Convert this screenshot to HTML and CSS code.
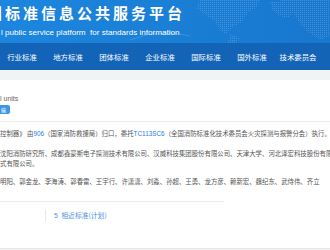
FILE: index.html
```html
<!DOCTYPE html>
<html>
<head>
	<meta charset="utf-8">
	<title>全国标准信息公共服务平台</title>
	<link rel="stylesheet" href="styles.css">
</head>
<body>
	<header class="banner">
		<svg class="map" width="200" height="43" viewBox="0 0 200 43">
			<defs>
				<pattern id="dots" width="2" height="2" patternUnits="userSpaceOnUse">
					<rect width="1" height="1" fill="#fff" />
				</pattern>
			</defs>
			<g fill="url(#dots)" opacity="0.18">
				<path d="M70 0 L130 0 L126 8 L118 12 L112 22 L104 26 L96 34 L90 30 L84 20 L74 14 L66 8 Z" />
				<path d="M140 2 L160 0 L166 10 L158 18 L150 16 L142 10 Z" />
				<path d="M150 0 L200 0 L200 36 L190 40 L178 32 L170 24 L164 14 L156 6 Z" />
				<path d="M100 34 L110 38 L106 43 L98 43 Z" />
			</g>
			<path d="M0 40 Q30 28 60 36" stroke="#fff" stroke-opacity="0.15" fill="none" />
		</svg>
		<h1 class="title">国标准信息公共服务平台</h1>
		<p class="subtitle">l public service platform&nbsp; for standards information</p>
	</header>

	<nav class="menu">
		<a class="menuItem">行业标准</a>
		<a class="menuItem">地方标准</a>
		<a class="menuItem">团体标准</a>
		<a class="menuItem">企业标准</a>
		<a class="menuItem">国际标准</a>
		<a class="menuItem">国外标准</a>
		<a class="menuItem">技术委员会</a>
	</nav>

	<div class="band"></div>

	<div class="panel">
		<div class="units">
			<div class="unitsLabel">l units</div>
			<span class="tag">输</span>
		</div>
		<div class="detail">
			<p class="row">控制器》 由<a class="link">906</a>（国家消防救援局）归口，委托<a class="link">TC113SC6</a>（全国消防标准化技术委员会火灾探测与报警分会）执行。</p>
			<p class="row rowGap">沈阳消防研究所、成都鑫豪斯电子探测技术有限公司、汉威科技集团股份有限公司、天津大学、河北泽宏科技股份有限</p>
			<p class="row">式有限公司。</p>
			<p class="row rowNames">明阳、郭金龙、李海涛、郭春雷、王宇行、许潇潇、刘淼、孙超、王勇、龙方彦、赖新宏、魏纪东、武侍伟、齐立</p>
		</div>
		<div class="tabLine"></div>
		<div class="tabBar">
			<span class="sep"></span>
			<a class="tab"><b>5</b> 相近标准(计划)</a>
		</div>
	</div>
</body>
</html>
```

FILE: styles.css
```css
html, body {
	margin: 0;
	background: #f2f3f5;
	font-family: "Noto Sans CJK SC", sans-serif;
	overflow: hidden;
}

.banner {
	position: relative;
	height: 43px;
	background: linear-gradient(90deg, #1c86de 0%, #1a7fd6 50%, #1877cf 100%);
	color: #fff;
	overflow: hidden;
}
.map {
	position: absolute;
	right: 0;
	top: 0;
}
.title {
	margin: 0 0 0 -13px;
	padding-top: 3px;
	font-size: 15px;
	line-height: 20px;
	font-weight: bold;
	letter-spacing: 3px;
	white-space: nowrap;
}
.subtitle {
	margin: 5px 0 0 1px;
	font-family: "Liberation Sans", Arial, sans-serif;
	font-size: 8.1px;
	line-height: 10px;
	white-space: nowrap;
}

.menu {
	display: flex;
	height: 27px;
	margin-left: -1px;
	background: #1364b7;
}
.menuItem {
	flex: 0 0 46px;
	color: #fff;
	font-size: 7.4px;
	line-height: 27px;
	text-align: center;
	white-space: nowrap;
}

.band {
	height: 10px;
}

.panel {
	background: #fff;
	height: 168px;
	border-bottom: 1px solid #e6e6e6;
	overflow: hidden;
}

.units {
	padding-top: 14px;
	height: 27px;
	border-bottom: 1px solid #ececec;
}
.unitsLabel {
	color: #666;
	font-family: "Liberation Sans", Arial, sans-serif;
	font-size: 7px;
	line-height: 10px;
	white-space: nowrap;
}
.tag {
	display: inline-block;
	margin-top: 1px;
	padding: 0 4px 0 1px;
	height: 9px;
	background: #3d97e8;
	border-radius: 0 2px 2px 0;
	color: #fff;
	font-size: 5px;
	line-height: 9px;
	vertical-align: top;
}

.detail {
	padding-top: 7px;
	height: 72px;
	color: #555;
	font-size: 6.4px;
}
.row {
	margin: 0;
	line-height: 10px;
	white-space: nowrap;
}
.rowGap {
	margin-top: 10px;
}
.rowNames {
	margin-top: 8px;
}
.link {
	color: #2a7fdc;
	font-family: "Liberation Sans", Arial, sans-serif;
}

.tabLine {
	width: 224px;
	height: 1px;
	background: #ececec;
}
.tabBar {
	display: flex;
	align-items: center;
	height: 26px;
	padding-left: 45px;
}
.sep {
	width: 1px;
	height: 13px;
	background: #e8e8e8;
	margin-right: 8px;
}
.tab {
	color: #4d92dc;
	font-size: 6.8px;
	white-space: nowrap;
}
.tab b {
	font-weight: normal;
	font-family: "Liberation Sans", Arial, sans-serif;
	margin-right: 2px;
}
```
